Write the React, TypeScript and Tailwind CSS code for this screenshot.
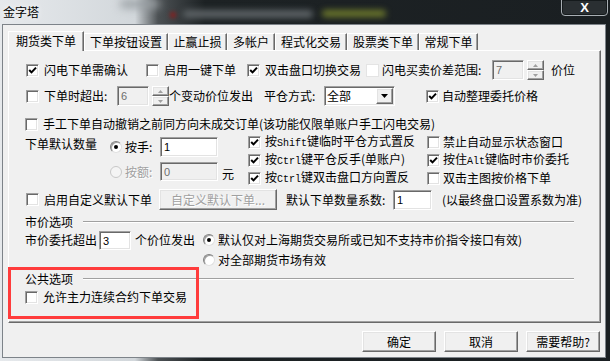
import React from 'react';

const sunken =
  'border border-t-[#a0a0a0] border-l-[#a0a0a0] border-r-white border-b-white shadow-[inset_1px_1px_0_#696969,inset_-1px_-1px_0_#e3e3e3]';
const raised =
  'border border-t-white border-l-white border-r-[#696969] border-b-[#696969] shadow-[inset_-1px_-1px_0_#a0a0a0,inset_1px_1px_0_#e3e3e3]';
const mono = "font-['Liberation_Mono',monospace] text-[10px]";
const dimText = 'text-[#a0a0a0] [text-shadow:1px_1px_0_#ffffff]';

const Check = ({ on = false, flat = false }: { on?: boolean; flat?: boolean }) => (
  <span
    className={`relative w-[13px] h-[13px] shrink-0 bg-white ${
      flat ? 'border border-[#e4e4e4]' : sunken
    }`}
  >
    {on && (
      <svg className="absolute left-0 top-0" width="11" height="11" viewBox="0 0 11 11">
        <path d="M2.2 5l2.3 2.4L9 2.6" fill="none" stroke="#000" strokeWidth="2" />
      </svg>
    )}
  </span>
);

const CB = ({
  on,
  flat,
  children,
  className = '',
  gap = 'ml-[5px]',
}: {
  on?: boolean;
  flat?: boolean;
  children: React.ReactNode;
  className?: string;
  gap?: string;
}) => (
  <div className={`flex items-center shrink-0 ${className}`}>
    <Check on={on} flat={flat} />
    <span className={`${gap} whitespace-nowrap`}>{children}</span>
  </div>
);

const Radio = ({ on = false, dis = false }: { on?: boolean; dis?: boolean }) => (
  <span
    className={`w-[12px] h-[12px] rounded-full shrink-0 flex items-center justify-center border ${
      dis
        ? 'bg-[#f4f4f4] border-[#c8c8c8]'
        : 'bg-white border-t-[#808080] border-l-[#808080] border-r-[#e0e0e0] border-b-[#e0e0e0] shadow-[inset_1px_1px_0_#a0a0a0]'
    }`}
  >
    {on && <span className="w-[4px] h-[4px] rounded-full bg-black" />}
  </span>
);

const Box = ({ v, dis = false, className = '' }: { v: string; dis?: boolean; className?: string }) => (
  <div
    className={`${sunken} ${
      dis ? 'bg-[#f0f0f0] text-[#6d6d6d]' : 'bg-white text-black'
    } flex items-center pl-[3px] shrink-0 font-['Liberation_Sans',sans-serif] text-[11px] ${className}`}
  >
    {v}
  </div>
);

const Arrow = ({ up }: { up?: boolean }) => (
  <svg width="5" height="3" viewBox="0 0 5 3">
    <path d={up ? 'M2.5 0L5 3H0z' : 'M0 0h5L2.5 3z'} fill="#a0a0a0" />
  </svg>
);

const Spin = ({ className = '' }: { className?: string }) => (
  <div className={`flex flex-col w-[17px] h-[20px] shrink-0 ${className}`}>
    <div className={`flex-1 ${raised} bg-[#f0f0f0] flex items-center justify-center`}>
      <Arrow up />
    </div>
    <div className={`flex-1 ${raised} bg-[#f0f0f0] flex items-center justify-center`}>
      <Arrow />
    </div>
  </div>
);

const Group = ({ label, className = '' }: { label: string; className?: string }) => (
  <div className={`flex items-center h-[14px] pl-[16px] pr-[26px] ${className}`}>
    <span className="w-[58px] whitespace-nowrap">{label}</span>
    <div className="flex-1 border-t border-t-[#a0a0a0] border-b border-b-white" />
  </div>
);

const TABS = [
  { label: '下单按钮设置', w: 'w-[84px]' },
  { label: '止赢止损', w: 'w-[59px]' },
  { label: '多帐户', w: 'w-[48px]' },
  { label: '程式化交易', w: 'w-[72px]' },
  { label: '股票类下单', w: 'w-[72px]' },
  { label: '常规下单', w: 'w-[59px]' },
];

export default function App() {
  return (
    <div className="relative w-[610px] h-[361px] overflow-hidden flex flex-col font-['Noto_Sans_CJK_SC',sans-serif] text-[12px] leading-[14px] text-black bg-[linear-gradient(90deg,#e6e9ec_0px,#d2d7db_135px,#4c5154_158px,#1d2224_205px,#1a1f22_100%)]">
      {/* Title bar */}
      <div className="relative h-[24px] flex items-start justify-between shrink-0">
        <span className="absolute left-[170px] top-[12px] w-[6px] h-[6px] rounded-full bg-[#8a1c1c] blur-[2px]" />
        <span className="absolute left-[183px] top-[10px] w-[130px] h-[8px] rounded bg-[#5d6366] blur-[3px]" />
        <span className="absolute left-[322px] top-[10px] w-[64px] h-[7px] rounded bg-[#6e7a2c] blur-[3px]" />
        <span className="absolute left-[120px] top-[0px] w-[40px] h-[8px] rounded bg-[#9aa0a4] blur-[4px]" />
        <span className="relative ml-[3px] mt-[5px] text-[12px] leading-[14px] [text-shadow:0_0_6px_#ffffff]">
          金字塔
        </span>
        <div className="relative mr-[2px] -mt-px w-[47px] h-[17px] rounded-b-[4px] border border-[#a8aeb3] bg-[#2a2f32] shadow-[inset_0_0_0_1px_#151a1c] flex items-center justify-center">
          <span className="text-white text-[13px] font-bold font-['Liberation_Sans',sans-serif] leading-none">
            X
          </span>
        </div>
      </div>

      {/* Client */}
      <div className="ml-[2px] w-[604px] h-[334px] shrink-0 border border-[#7d8389] bg-[#f0f0f0] flex flex-col">
        {/* Tabs */}
        <div className="flex items-end h-[19px] ml-[5px] mt-[6px]">
          <div className="relative z-10 -mb-px w-[76px] h-[20px] bg-[#f0f0f0] border-t border-l border-r border-t-white border-l-white border-r-[#696969] shadow-[inset_-1px_0_0_#a0a0a0] flex items-center justify-center pb-[2px]">
            期货类下单
          </div>
          {TABS.map((t) => (
            <div
              key={t.label}
              className={`${t.w} h-[17px] border-t border-l border-r border-t-white border-l-white border-r-[#696969] shadow-[inset_-1px_0_0_#a0a0a0] flex items-center justify-center whitespace-nowrap`}
            >
              {t.label}
            </div>
          ))}
        </div>

        {/* Panel */}
        <div className="relative w-[593px] h-[273px] ml-[5px] bg-[#f0f0f0] border border-t-white border-l-white border-r-[#696969] border-b-[#696969] shadow-[inset_-1px_-1px_0_#a0a0a0] flex flex-col">
          <div className="flex items-center h-[20px] mt-[9px] pl-[17px]">
            <CB on className="w-[120px]">闪电下单需确认</CB>
            <CB className="w-[101px]">启用一键下单</CB>
            <CB on className="w-[119px]">双击盘口切换交易</CB>
            <CB flat className="w-[126px]" gap="ml-[3px]">
              闪电买卖价差范围:
            </CB>
            <Box v="7" dis className="w-[32px] h-[20px]" />
            <Spin className="ml-[3px]" />
            <span className="ml-[7px]">价位</span>
          </div>

          <div className="flex items-center h-[20px] mt-[6px] pl-[17px]">
            <CB className="w-[91px]">下单时超出:</CB>
            <Box v="6" dis className="w-[32px] h-[20px]" />
            <Spin className="ml-[3px]" />
            <span className="w-[95px] whitespace-nowrap">个变动价位发出</span>
            <span className="w-[60px] whitespace-nowrap">平仓方式:</span>
            <div className={`${sunken} bg-white w-[71px] h-[20px] flex items-center shrink-0`}>
              <span className="flex-1 pl-[2px]">全部</span>
              <div
                className={`${raised} bg-[#f0f0f0] w-[17px] h-[16px] mr-[1px] flex items-center justify-center`}
              >
                <svg width="7" height="4" viewBox="0 0 7 4">
                  <path d="M0 0h7L3.5 4z" fill="#000" />
                </svg>
              </div>
            </div>
            <CB on className="ml-[31px]" gap="ml-[3px]">
              自动整理委托价格
            </CB>
          </div>

          <div className="flex items-center h-[18px] mt-[9px] pl-[16px]">
            <CB>手工下单自动撤销之前同方向未成交订单(该功能仅限单账户手工闪电交易)</CB>
          </div>

          <div className="flex h-[54px] pl-[16px]">
            <div className="w-[223px] flex shrink-0">
              <span className="w-[85px] pt-[4px] whitespace-nowrap">下单默认数量</span>
              <div className="flex flex-col pt-[4px]">
                <div className="flex items-center h-[20px]">
                  <Radio on />
                  <span className="ml-[3px] w-[35px]">按手:</span>
                  <Box v="1" className="w-[58px] h-[20px]" />
                </div>
                <div className="flex items-center h-[19px] mt-[5px]">
                  <Radio dis />
                  <span className={`ml-[3px] w-[35px] ${dimText}`}>按额:</span>
                  <Box v="0" dis className="w-[58px] h-[19px]" />
                  <span className="ml-[4px] self-end">元</span>
                </div>
              </div>
            </div>
            <div className="w-[179px] flex flex-col shrink-0">
              <CB on className="h-[18px]" gap="ml-[4px]">
                按<span className={mono}>Shift</span>键临时平仓方式置反
              </CB>
              <CB on className="h-[18px]" gap="ml-[4px]">
                按<span className={mono}>Ctrl</span>键平仓反手(单账户)
              </CB>
              <CB on className="h-[18px]" gap="ml-[4px]">
                按<span className={mono}>Ctrl</span>键双击盘口方向置反
              </CB>
            </div>
            <div className="flex flex-col">
              <CB className="h-[18px]" gap="ml-[3px]">
                禁止自动显示状态窗口
              </CB>
              <CB on className="h-[18px]" gap="ml-[3px]">
                按住<span className={mono}>Alt</span>键临时市价委托
              </CB>
              <CB className="h-[18px]" gap="ml-[3px]">
                双击主图按价格下单
              </CB>
            </div>
          </div>

          <div className="flex items-center h-[23px] mt-[1px] pl-[17px]">
            <CB className="w-[133px]">启用自定义默认下单</CB>
            <div
              className={`${raised} bg-[#f0f0f0] w-[118px] h-[21px] flex items-center justify-center shrink-0 ${dimText}`}
            >
              自定义默认下单...
            </div>
            <span className="ml-[9px] w-[107px] whitespace-nowrap">默认下单数量系数:</span>
            <Box v="1" className="w-[39px] h-[20px]" />
            <span className="ml-[10px] whitespace-nowrap">(以最终盘口设置系数为准)</span>
          </div>

          <Group label="市价选项" className="mt-[4px]" />

          <div className="flex mt-[1px] pl-[16px]">
            <span className="w-[74px] h-[20px] flex items-center whitespace-nowrap">市价委托超出</span>
            <Box v="3" className="w-[32px] h-[19px] mt-[1px]" />
            <span className="ml-[4px] w-[68px] h-[20px] flex items-center whitespace-nowrap">个价位发出</span>
            <div className="flex flex-col">
              <div className="flex items-center h-[20px]">
                <Radio on />
                <span className="ml-[3px] whitespace-nowrap">
                  默认仅对上海期货交易所或已知不支持市价指令接口有效)
                </span>
              </div>
              <div className="flex items-center h-[20px]">
                <Radio />
                <span className="ml-[3px] whitespace-nowrap">对全部期货市场有效</span>
              </div>
            </div>
          </div>

          <Group label="公共选项" className="mt-[2px]" />

          <div className="flex items-center h-[18px] mt-[2px] pl-[16px]">
            <CB>允许主力连续合约下单交易</CB>
          </div>
        </div>

        {/* Buttons */}
        <div className="flex justify-end gap-[8px] mt-[8px] w-[593px] ml-[5px] pr-[1px]">
          <div className={`${raised} bg-[#f0f0f0] w-[74px] h-[21px] flex items-center justify-center`}>确定</div>
          <div className={`${raised} bg-[#f0f0f0] w-[74px] h-[21px] flex items-center justify-center`}>取消</div>
          <div className={`${raised} bg-[#f0f0f0] w-[74px] h-[21px] flex items-center justify-center`}>
            需要帮助?
          </div>
        </div>
      </div>

      {/* highlight annotation */}
      <div className="absolute left-[8px] top-[267px] w-[191px] h-[52px] border-[3px] border-[#ff3c3c]" />
    </div>
  );
}
